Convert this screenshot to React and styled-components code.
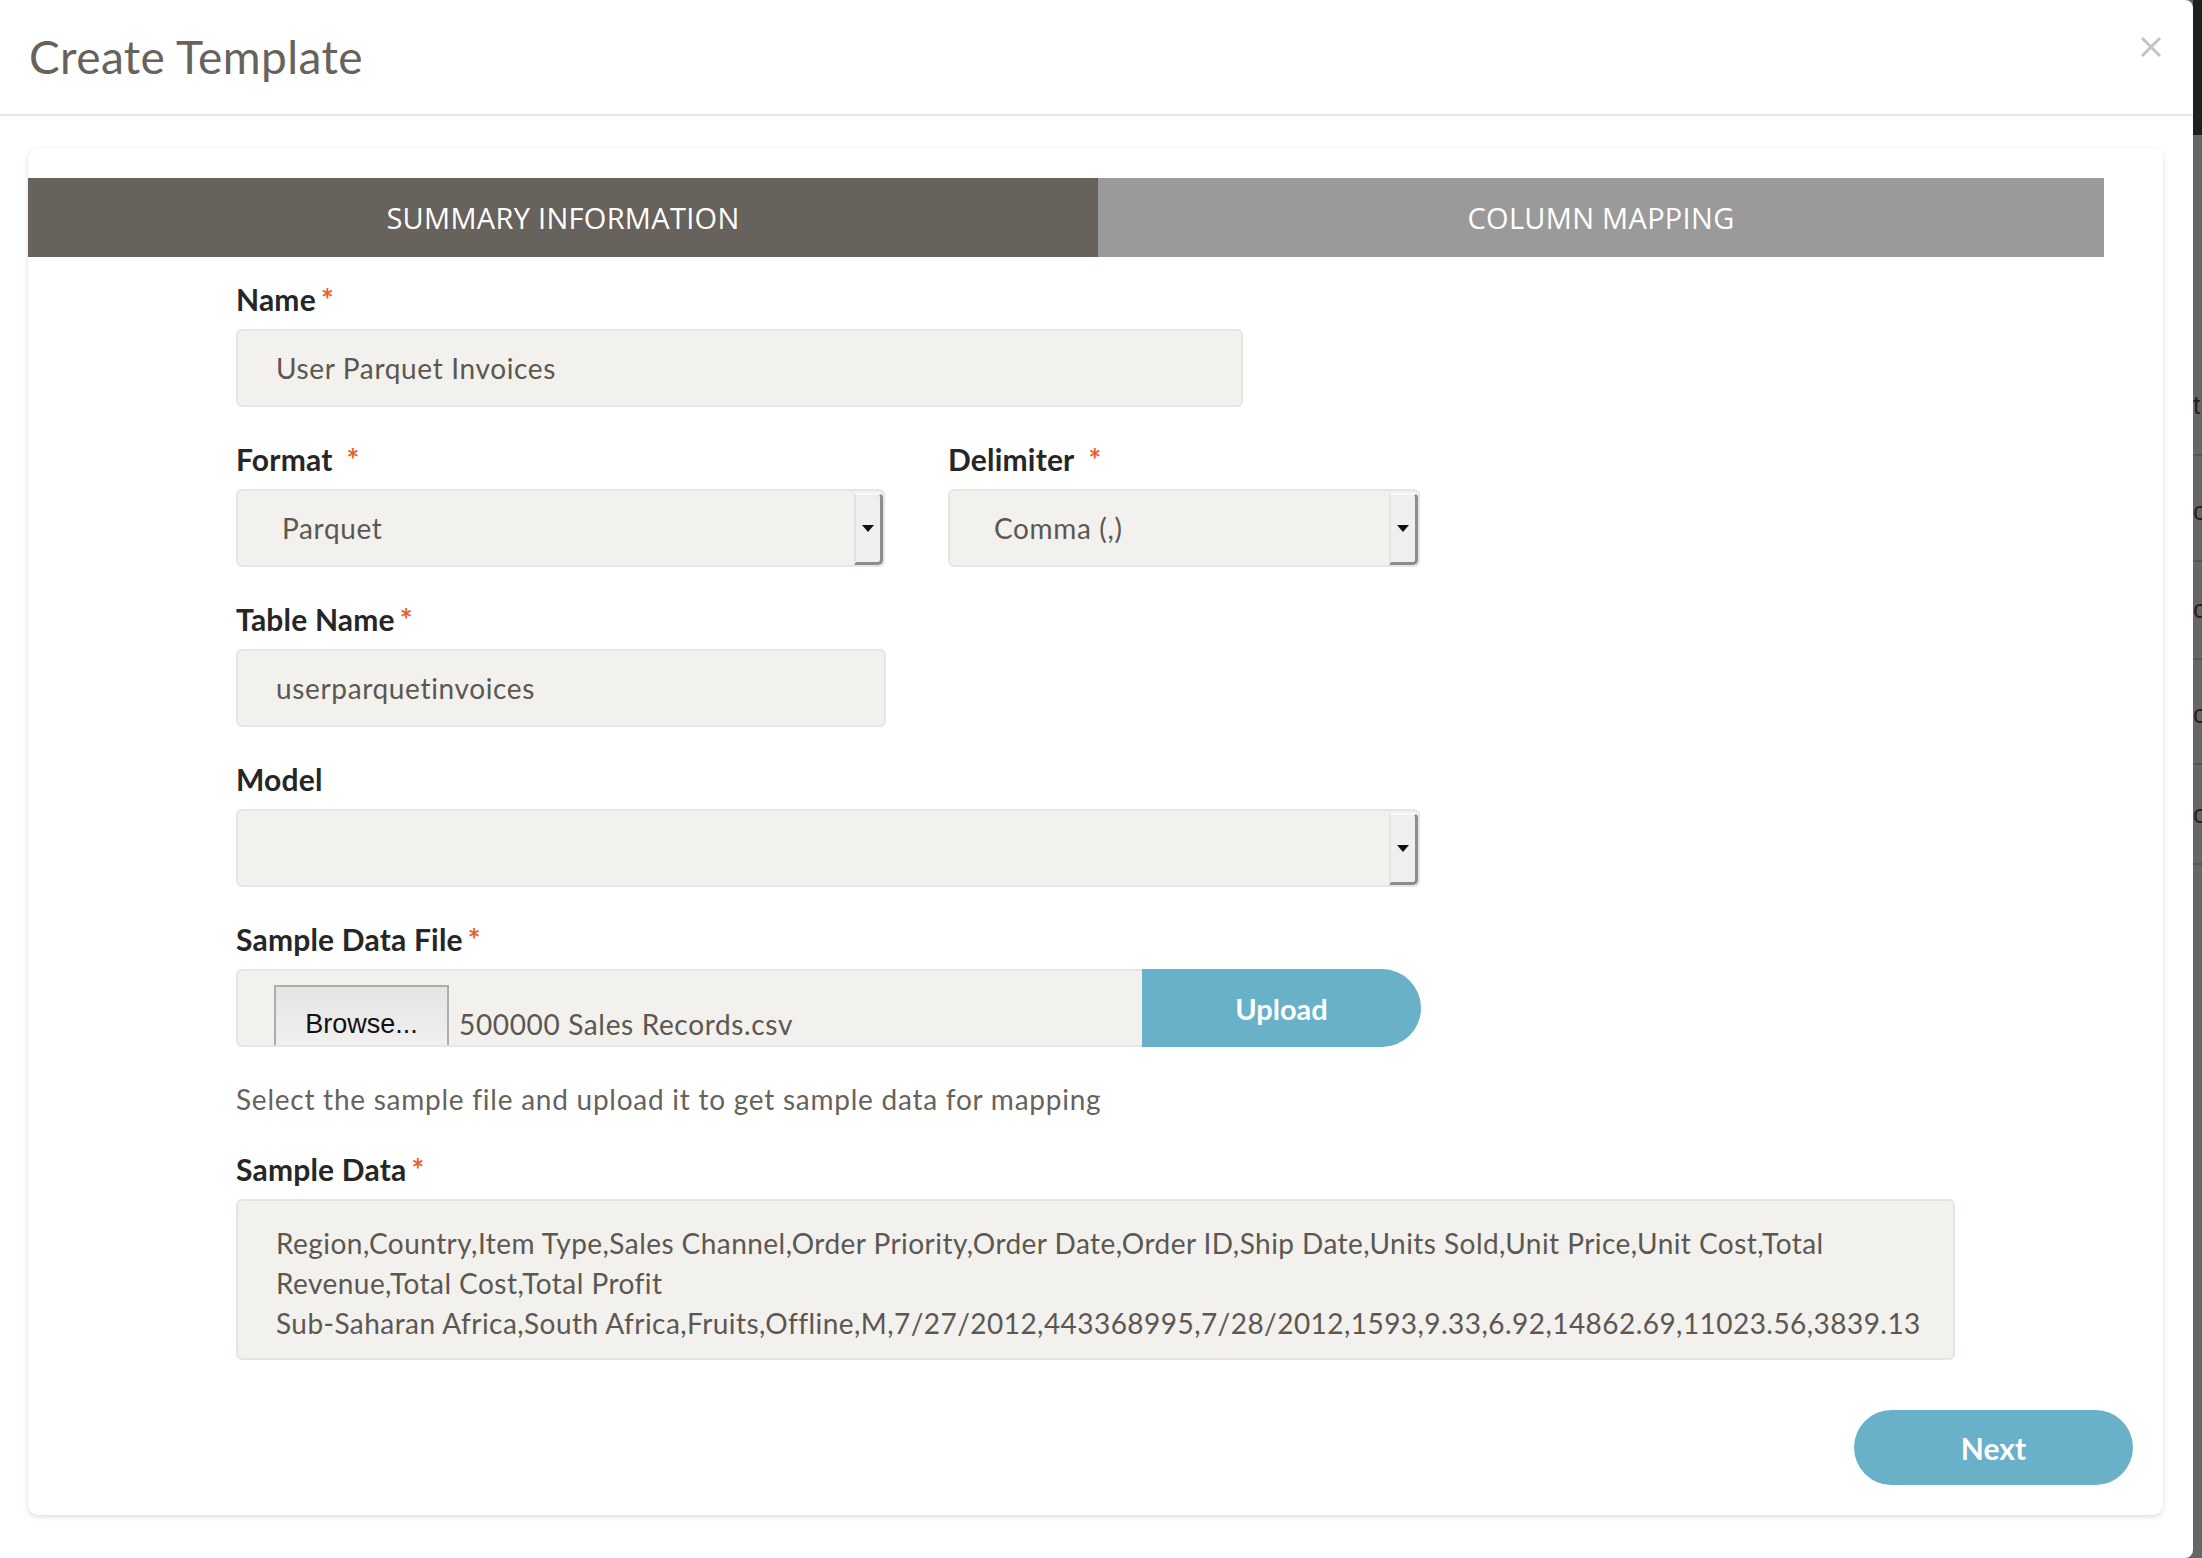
import React from 'react';
import styled, { createGlobalStyle } from 'styled-components';

const GlobalStyle = createGlobalStyle`
  html, body {
    margin: 0;
    padding: 0;
    background: #666;
  }
  body {
    font-family: Lato, "Noto Sans", sans-serif;
  }
`;

const Page = styled.div`
  display: flex;
  width: 2202px;
  height: 1558px;
  overflow: hidden;
`;

const Modal = styled.div`
  flex: 0 0 2193px;
  display: flex;
  flex-direction: column;
  background: #fff;
  border-radius: 0 8px 8px 0;
`;

const Header = styled.div`
  display: flex;
  align-items: center;
  justify-content: space-between;
  height: 116px;
  box-sizing: border-box;
  padding: 0 30px 2px 29px;
  border-bottom: 2px solid #e6e6e6;
`;

const Title = styled.h1`
  margin: 0;
  font-family: Lato, sans-serif;
  font-weight: 400;
  font-size: 46px;
  color: #67625c;
  letter-spacing: 0.4px;
`;

const Close = styled.span`
  display: flex;
  align-items: center;
  justify-content: center;
  width: 24px;
  height: 24px;
  margin-top: -18px;
  color: #c4c4c4;
`;

const Card = styled.div`
  margin: 32px 30px 0 28px;
  height: 1367px;
  box-sizing: border-box;
  padding-top: 30px;
  border-radius: 10px;
  background: #fff;
  box-shadow: 0 2px 5px rgba(140, 128, 105, 0.28);
  display: flex;
  flex-direction: column;
`;

const Tabs = styled.div`
  display: flex;
  width: 2076px;
  height: 79px;
`;

const Tab = styled.div`
  flex: 0 0 ${p => p.$w}px;
  display: flex;
  align-items: center;
  justify-content: center;
  background: ${p => (p.$active ? '#67625b' : '#9a9a9a')};
  color: #fff;
  font-family: "Open Sans", sans-serif;
  font-size: 29px;
  letter-spacing: 0.3px;
`;

const Form = styled.div`
  display: flex;
  flex-direction: column;
  padding: 22px 0 0 208px;
`;

const Field = styled.div`
  display: flex;
  flex-direction: column;
  width: ${p => p.$w}px;
  margin-bottom: ${p => (p.$mb != null ? p.$mb : 32)}px;
`;

const Label = styled.label`
  height: 40px;
  line-height: 40px;
  margin-bottom: 10px;
  font-weight: 700;
  font-size: 30px;
  letter-spacing: 0.2px;
  color: #262626;
`;

const Star = styled.span`
  color: #e8602c;
  margin-left: ${p => (p.$gap ? 14 : 5)}px;
`;

const Input = styled.div`
  height: 78px;
  box-sizing: border-box;
  display: flex;
  align-items: center;
  padding-left: 38px;
  background: #f2f1ee;
  border: 2px solid #e7e5e0;
  border-radius: 6px;
  font-size: 28px;
  color: #5c5751;
  letter-spacing: 0.65px;
`;

const Select = styled(Input)`
  padding-left: 44px;
  justify-content: space-between;
  padding-right: 0;
`;

const ArrowBox = styled.span`
  align-self: stretch;
  width: 24px;
  margin-top: 2px;
  display: flex;
  align-items: center;
  justify-content: center;
  background: #efefef;
  border-left: 2px solid #e2e2e2;
  border-top: 2px solid #f8f8f8;
  border-right: 3px solid #8d8d8d;
  border-bottom: 3px solid #8d8d8d;
  border-radius: 0 5px 5px 0;
`;

const Arrow = styled.span`
  width: 0;
  height: 0;
  border-left: 6px solid transparent;
  border-right: 6px solid transparent;
  border-top: 7px solid #111;
`;

const Row = styled.div`
  display: flex;
  gap: 63px;
`;

const FileRow = styled.div`
  display: flex;
  height: 78px;
  width: 1185px;
`;

const FileBox = styled.div`
  flex: 1;
  display: flex;
  align-items: flex-start;
  gap: 10px;
  padding: 14px 0 0 36px;
  box-sizing: border-box;
  overflow: hidden;
  background: #f2f1ee;
  border: 2px solid #e7e5e0;
  border-right: none;
  border-radius: 6px 0 0 6px;
`;

const Browse = styled.span`
  flex: 0 0 auto;
  width: 175px;
  height: 90px;
  box-sizing: border-box;
  padding-top: 22px;
  text-align: center;
  border: 2px solid #adadad;
  background: linear-gradient(#e4e4e4, #f6f6f6);
  font-family: "Liberation Sans", Arial, sans-serif;
  font-size: 27px;
  color: #111;
`;

const FileName = styled.span`
  padding-top: 22px;
  font-size: 28px;
  color: #5c5751;
  letter-spacing: 0.65px;
`;

const Upload = styled.button`
  flex: 0 0 279px;
  border: none;
  border-radius: 0 39px 39px 0;
  background: #68b1c8;
  color: #fff;
  font-family: Lato, sans-serif;
  font-weight: 700;
  font-size: 29px;
  padding: 0;
`;

const Help = styled.div`
  height: 40px;
  line-height: 40px;
  margin: 32px 0 30px;
  font-size: 28px;
  color: #67625c;
  letter-spacing: 0.75px;
`;

const TextArea = styled.div`
  box-sizing: border-box;
  height: 161px;
  padding: 22px 0 0 38px;
  background: #f2f1ee;
  border: 2px solid #e7e5e0;
  border-radius: 6px;
  font-size: 28px;
  line-height: 40px;
  color: #5c5751;
  letter-spacing: 0.45px;
`;

const Line = styled.div`
  white-space: nowrap;
`;

const Footer = styled.div`
  display: flex;
  justify-content: flex-end;
  padding: 50px 30px 0 0;
`;

const Next = styled.button`
  width: 279px;
  height: 75px;
  border: none;
  border-radius: 38px;
  background: #68b1c8;
  color: #fff;
  font-family: Lato, sans-serif;
  font-weight: 700;
  font-size: 30px;
`;

const Backdrop = styled.div`
  flex: 1;
  display: flex;
  flex-direction: column;
  background: #666;
  overflow: hidden;
`;

const BackTop = styled.div`
  height: 135px;
  background: #1f1f1f;
`;

const BackRow = styled.div`
  height: ${p => p.$h}px;
  box-sizing: border-box;
  padding-bottom: 34px;
  border-bottom: 2px solid #555;
  display: flex;
  align-items: flex-end;
  font-family: "Liberation Sans", sans-serif;
  font-size: 26px;
  line-height: 30px;
  color: #222;
  white-space: nowrap;
`;

const Field2 = ({ label, gap, w, mb, children }) => (
  <Field $w={w} $mb={mb}>
    <Label>
      {label}
      <Star $gap={gap}>*</Star>
    </Label>
    {children}
  </Field>
);

const SelectBox = ({ value }) => (
  <Select>
    <span>{value}</span>
    <ArrowBox>
      <Arrow />
    </ArrowBox>
  </Select>
);

export default function App() {
  return (
    <>
      <GlobalStyle />
      <Page>
        <Modal>
          <Header>
            <Title>Create Template</Title>
            <Close>
              <svg width="22" height="22" viewBox="0 0 22 22">
                <path d="M2 2L20 20M20 2L2 20" stroke="currentColor" strokeWidth="3" />
              </svg>
            </Close>
          </Header>
          <Card>
            <Tabs>
              <Tab $active $w={1070}>SUMMARY INFORMATION</Tab>
              <Tab $w={1006}>COLUMN MAPPING</Tab>
            </Tabs>
            <Form>
              <Field2 label="Name" w={1007}>
                <Input>User Parquet Invoices</Input>
              </Field2>
              <Row>
                <Field2 label="Format" gap w={649}>
                  <SelectBox value="Parquet" />
                </Field2>
                <Field2 label="Delimiter" gap w={472}>
                  <SelectBox value="Comma (,)" />
                </Field2>
              </Row>
              <Field2 label="Table Name" w={650}>
                <Input>userparquetinvoices</Input>
              </Field2>
              <Field $w={1184}>
                <Label>Model</Label>
                <SelectBox value="" />
              </Field>
              <Field2 label="Sample Data File" w={1185} mb={0}>
                <FileRow>
                  <FileBox>
                    <Browse>Browse...</Browse>
                    <FileName>500000 Sales Records.csv</FileName>
                  </FileBox>
                  <Upload>Upload</Upload>
                </FileRow>
              </Field2>
              <Help>Select the sample file and upload it to get sample data for mapping</Help>
              <Field2 label="Sample Data" w={1719} mb={0}>
                <TextArea>
                  <Line>Region,Country,Item Type,Sales Channel,Order Priority,Order Date,Order ID,Ship Date,Units Sold,Unit Price,Unit Cost,Total</Line>
                  <Line>Revenue,Total Cost,Total Profit</Line>
                  <Line>Sub-Saharan Africa,South Africa,Fruits,Offline,M,7/27/2012,443368995,7/28/2012,1593,9.33,6.92,14862.69,11023.56,3839.13</Line>
                </TextArea>
              </Field2>
            </Form>
            <Footer>
              <Next>Next</Next>
            </Footer>
          </Card>
        </Modal>
        <Backdrop>
          <BackTop />
          <BackRow $h={321}>t</BackRow>
          <BackRow $h={106}>c</BackRow>
          <BackRow $h={98}>c</BackRow>
          <BackRow $h={105}>c</BackRow>
          <BackRow $h={100}>c</BackRow>
        </Backdrop>
      </Page>
    </>
  );
}
